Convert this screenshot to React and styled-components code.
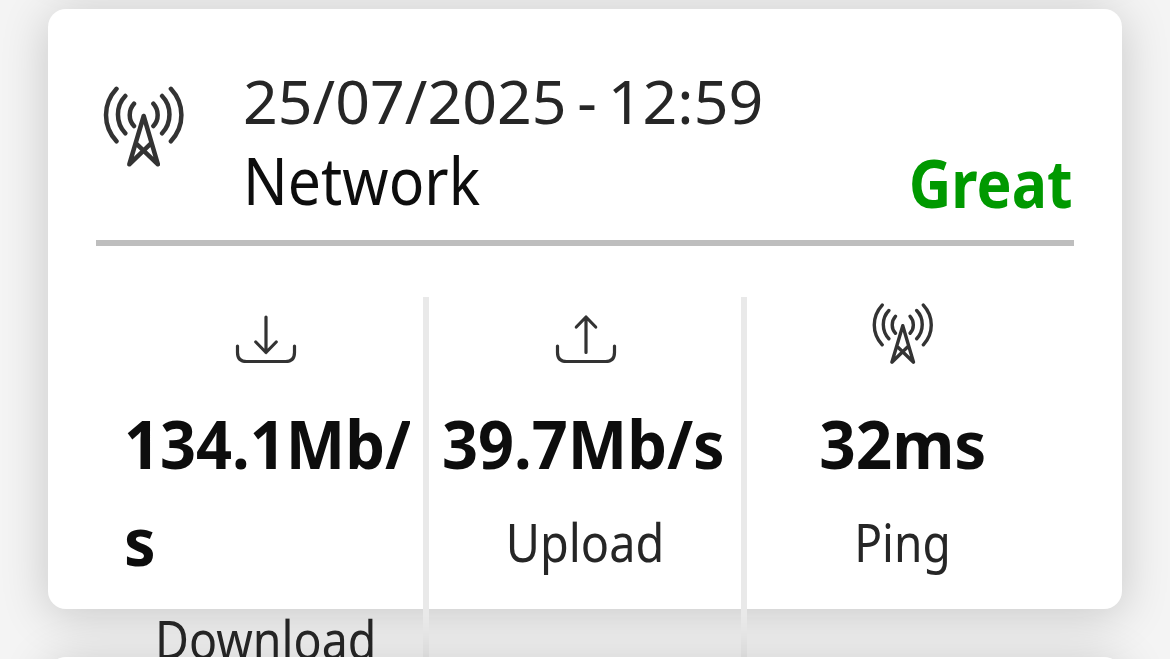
import React from "react";
import styled, { createGlobalStyle } from "styled-components";

const GlobalStyle = createGlobalStyle`
  * { box-sizing: border-box; }
  html, body { margin: 0; height: 100%; overflow: hidden; background: #f4f4f4; }
  body { font-family: "Noto Sans", "Open Sans", sans-serif; color: #0d0d0d; }
`;

const Page = styled.main`
  height: 659px;
  overflow: hidden;
  padding: 0 48px;
`;

const CardList = styled.div`
  display: flex;
  flex-direction: column;
  gap: 48px;
  margin-top: -159px;
`;

const Card = styled.section`
  position: relative;
  flex: none;
  height: ${(p) => p.$height}px;
  padding: 0 48px;
  border-radius: 18px;
  background: #fff;
  box-shadow: 0 6px 48px rgba(0, 0, 0, 0.19);
`;

const Header = styled.header`
  display: flex;
  align-items: flex-start;
  height: 237px;
  border-bottom: 6px solid #bebebe;
`;

const HeaderIcon = styled.div`
  width: 147px;
  padding: 77px 0 0 7px;
  line-height: 0;
`;

const Titles = styled.div`
  flex: 1;
  padding-top: 53px;
`;

const Line = styled.div`
  height: ${(p) => p.$height}px;
  line-height: ${(p) => p.$height}px;
  font-size: ${(p) => p.$size}px;
  color: ${(p) => p.$color};
  white-space: nowrap;
  word-spacing: -5px;
  transform: scaleX(${(p) => p.$squeeze});
  transform-origin: left;
`;

const Rating = styled.div`
  align-self: flex-end;
  height: 80px;
  margin: 0 1px 18px 0;
  line-height: 80px;
  font-size: 66px;
  font-weight: 700;
  color: #009900;
  transform: scaleX(${(p) => p.$squeeze});
  transform-origin: right;
`;

const Metrics = styled.div`
  display: flex;
  height: 460px;
  margin: 51px 9px 0;
`;

const Metric = styled.div`
  display: flex;
  flex-direction: column;
  align-items: center;
  width: ${(p) => p.$width}px;
  padding: 0 ${(p) => p.$right}px 0 ${(p) => p.$left}px;
  border-right: ${(p) => (p.$divider ? "6px solid #e9e9e9" : "0")};
`;

const IconSlot = styled.div`
  height: 98px;
  padding-top: ${(p) => p.$top}px;
  line-height: 0;
`;

const ValueClip = styled.div`
  width: 100%;
  overflow: hidden;
  display: flex;
  justify-content: ${(p) => (p.$wrapped ? "flex-start" : "center")};
  padding: ${(p) => (p.$wrapped ? "0 0 0 3px" : "0")};
`;

const Value = styled.div`
  flex: none;
  line-height: 97px;
  font-size: 67px;
  font-weight: 700;
  white-space: nowrap;
  transform: translateX(${(p) => p.$shift || 0}px) scaleX(${(p) => p.$squeeze});
  transform-origin: ${(p) => (p.$wrapped ? "left" : "center")};
`;

const Label = styled.div`
  height: 97px;
  line-height: 99px;
  font-size: 52px;
  color: #262626;
  white-space: nowrap;
  transform: translateX(${(p) => p.$shift || 0}px) scaleX(${(p) => p.$squeeze});
`;

const Stroke = styled.svg`
  display: block;
  fill: none;
  stroke: #333;
  stroke-linecap: round;
  stroke-linejoin: round;
`;

function Antenna({ size }) {
  return (
    <Stroke width={size} height={size} viewBox="0 0 82 82" strokeWidth="4.5">
      <path d="M13.500 2.800C-0.500 18 -0.500 40 13.500 55.300M22.300 10C12.500 20 12.500 37 22.300 47.300M31 17.700C25.300 24 25.300 34 31 40" />
      <path d="M67.900 2.800C81.900 18 81.900 40 67.900 55.300M59.100 10C68.900 20 68.900 37 59.100 47.300M50.400 17.700C56.100 24 56.100 34 50.400 40" />
      <path d="M40.700 30L26.300 78.300L48 57.300M40.700 30L54.900 78.300L33 57.300" />
    </Stroke>
  );
}

function Tray({ up }) {
  return (
    <Stroke width="62" height="52" viewBox="0 0 62 52" strokeWidth="3.2">
      <path d="M2.500 32V38.500Q2.500 47.500 11.500 47.500H50.500Q59.500 47.500 59.500 38.500V32" />
      <path d={up ? "M31 38.500V3M21.300 13L31 3L40.700 13" : "M31 3V38.500M20.800 28L31 38.500L41.200 28"} />
    </Stroke>
  );
}

export default function App() {
  return (
    <>
      <GlobalStyle />
      <Page>
        <CardList>
          <Card $height={120} />
          <Card $height={600}>
            <Header>
              <HeaderIcon><Antenna size={82} /></HeaderIcon>
              <Titles>
                <Line $height={78} $size={61} $color="#262626" $squeeze={0.997}>25/07/2025 - 12:59</Line>
                <Line $height={78} $size={66} $color="#0d0d0d" $squeeze={0.893}>Network</Line>
              </Titles>
              <Rating $squeeze={0.893}>Great</Rating>
            </Header>
            <Metrics>
              <Metric $width={324} $left={16} $right={13} $divider>
                <IconSlot $top={17}><Tray /></IconSlot>
                <ValueClip $wrapped>
                  <Value $wrapped $squeeze={0.94}>134.1Mb/<br />s</Value>
                </ValueClip>
                <Label $squeeze={0.895}>Download</Label>
              </Metric>
              <Metric $width={318} $left={12} $right={10} $divider>
                <IconSlot $top={17}><Tray up /></IconSlot>
                <ValueClip><Value $squeeze={0.94} $shift={-3}>39.7Mb/s</Value></ValueClip>
                <Label $squeeze={0.9} $shift={-1}>Upload</Label>
              </Metric>
              <Metric $width={318} $left={11} $right={18}>
                <IconSlot $top={6}><Antenna size={62} /></IconSlot>
                <ValueClip><Value $squeeze={0.952}>32ms</Value></ValueClip>
                <Label $squeeze={0.885}>Ping</Label>
              </Metric>
            </Metrics>
          </Card>
          <Card $height={600} />
        </CardList>
      </Page>
    </>
  );
}
